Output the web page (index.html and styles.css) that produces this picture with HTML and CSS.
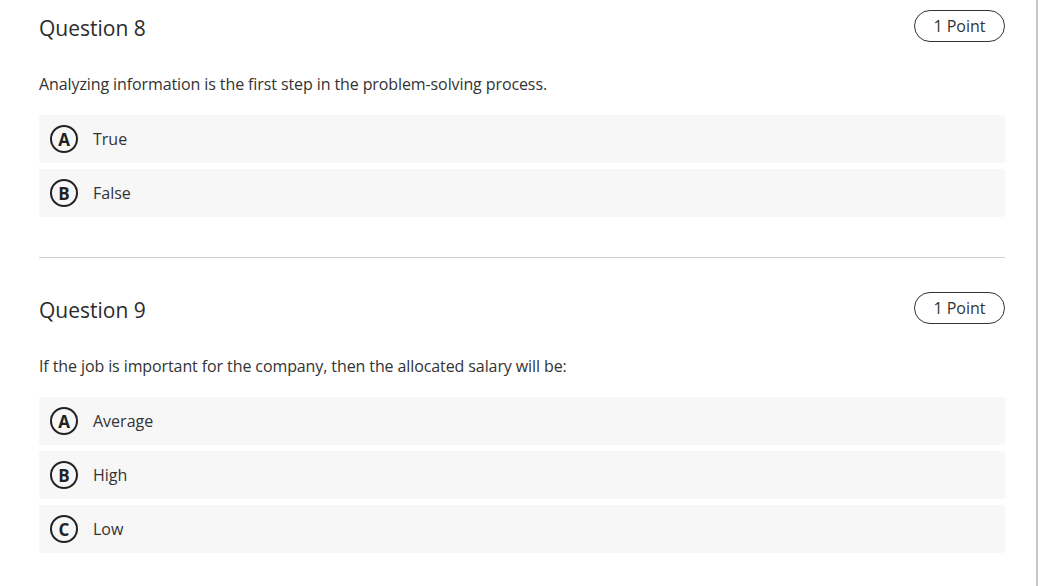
FILE: index.html
```html
<!DOCTYPE html>
<html>
<head>
<meta charset="utf-8">
<link rel="stylesheet" href="styles.css">
</head>
<body>
<div class="page">
  <section class="question">
    <div class="q-head">
      <h2 class="q-title">Question 8</h2>
      <span class="points">1 Point</span>
    </div>
    <p class="q-text">Analyzing information is the first step in the problem-solving process.</p>
    <div class="options">
      <div class="option"><span class="letter">A</span><span class="label">True</span></div>
      <div class="option"><span class="letter">B</span><span class="label">False</span></div>
    </div>
  </section>
  <hr class="divider">
  <section class="question">
    <div class="q-head">
      <h2 class="q-title">Question 9</h2>
      <span class="points">1 Point</span>
    </div>
    <p class="q-text">If the job is important for the company, then the allocated salary will be:</p>
    <div class="options">
      <div class="option"><span class="letter">A</span><span class="label">Average</span></div>
      <div class="option"><span class="letter">B</span><span class="label">High</span></div>
      <div class="option"><span class="letter">C</span><span class="label">Low</span></div>
    </div>
  </section>
</div>
</body>
</html>
```
FILE: styles.css
```css
html, body {
  margin: 0;
  padding: 0;
  background: #fff;
}
body {
  font-family: "Open Sans", "Noto Sans", sans-serif;
  color: #333;
}
.page {
  width: 1038px;
  height: 586px;
  box-sizing: border-box;
  border-right: 2px solid #c8c8c8;
  padding: 0 31px 0 39px;
  overflow: hidden;
}
.question {
  padding-top: 10px;
}
.q-head {
  display: flex;
  align-items: center;
  justify-content: space-between;
  height: 32px;
}
.q-title {
  margin: 0;
  font-size: 21px;
  font-weight: 500;
  color: #2b2b2b;
  line-height: 26px;
  padding-top: 4px;
}
.points {
  box-sizing: border-box;
  width: 91px;
  height: 32px;
  border: 1px solid #333;
  border-radius: 16px;
  display: flex;
  align-items: center;
  justify-content: center;
  font-size: 16px;
  color: #333;
}
.q-text {
  margin: 30px 0 0;
  font-size: 16px;
  letter-spacing: -0.1px;
  line-height: 24px;
  color: #333;
}
.options {
  margin-top: 19px;
  display: flex;
  flex-direction: column;
  gap: 6px;
}
.option {
  height: 48px;
  background: #f7f7f7;
  border-radius: 3px;
  display: flex;
  align-items: center;
  padding-left: 11px;
}
.letter {
  box-sizing: border-box;
  width: 28px;
  height: 28px;
  border: 2px solid #222;
  border-radius: 50%;
  display: flex;
  align-items: center;
  justify-content: center;
  font-size: 17px;
  font-weight: 700;
  color: #222;
  line-height: 1;
}
.label {
  margin-left: 15px;
  font-size: 16px;
  color: #333;
}
.divider {
  margin: 40px 0 0;
  border: 0;
  border-top: 1px solid #d0d0d0;
  height: 0;
}
.divider + .question {
  padding-top: 34px;
}
```
